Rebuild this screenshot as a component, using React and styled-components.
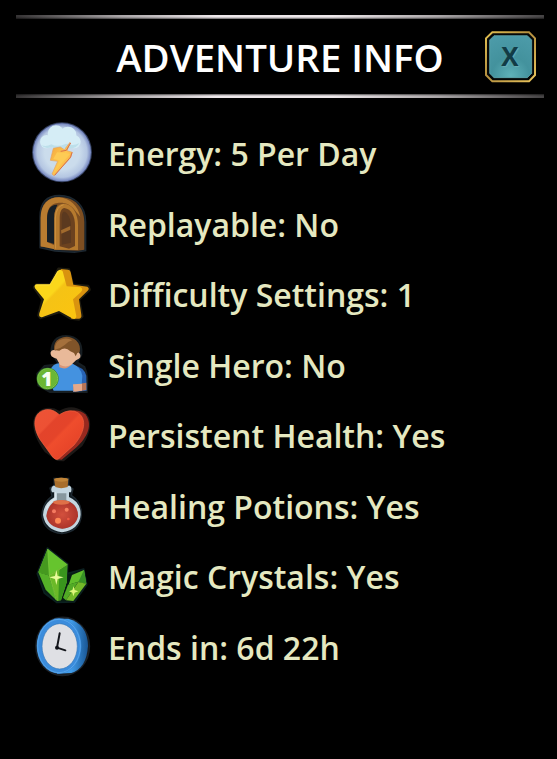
import React from 'react'
import styled, { createGlobalStyle } from 'styled-components'

const GlobalStyle = createGlobalStyle`
    body {
        margin: 0;
        background: #000;
        font-family: 'Open Sans', 'Noto Sans', sans-serif;
    }
`;

const EnergyIcon = () => (
    <Icon viewBox="0 9 228 210">
        <defs>
            <radialGradient id="orb">
                <stop offset="0.6" stopColor="#cbdcec" />
                <stop offset="0.86" stopColor="#b4c6e2" />
                <stop offset="1" stopColor="#7283bd" />
            </radialGradient>
            <linearGradient id="bolt" x1="0" y1="0" x2="1" y2="1">
                <stop offset="0" stopColor="#f0a43c" />
                <stop offset="0.5" stopColor="#ffc650" />
                <stop offset="1" stopColor="#f6a73b" />
            </linearGradient>
        </defs>
        <circle cx="114" cy="112" r="90" fill="#34405f" />
        <circle cx="114" cy="112" r="87" fill="url(#orb)" />
        <g fill="#d5edf6">
            <circle cx="68" cy="80" r="20" />
            <circle cx="96" cy="56" r="25" />
            <circle cx="132" cy="60" r="25" />
            <circle cx="150" cy="80" r="20" />
            <circle cx="105" cy="82" r="26" />
        </g>
        <path d="M52 90Q64 104 82 96Q106 113 126 98Q154 106 166 84Q148 95 126 86Q100 98 82 88Q66 97 52 90Z" fill="#bddfea" />
        <path d="M88 100L109 96L121 104L138 82L129 107L145 112L138 130L90 182L84 177L101 139L79 136Z" fill="url(#bolt)" stroke="#e4a263" strokeWidth="2" />
        <path d="M140 84L127 106L110 109M144 112L140 126L92 181" fill="none" stroke="#d9704b" strokeWidth="3" />
        <path d="M99 112L124 114L138 117L112 146L92 171L108 136L88 132Z" fill="#fdcb55" />
    </Icon>
)

const DoorIcon = () => (
    <Icon viewBox="0 5 228 210">
        <path d="M48 181V88C48 42 72 24 106 24C150 24 185 55 185 104V190L151 195L93 191Z" fill="#17212a" stroke="#1d2831" strokeWidth="4" />
        <path d="M50 178V92C50 50 71 29 106 30C152 29 181 60 181 104V187L161 190L90 187V181Z" fill="#7d4e21" />
        <path d="M50 177V92C50 49 76 29 106 30C139 33 161 55 169 88L156 73C141 49 118 44 100 47C79 50 69 66 69 92V164L91 174V186Z" fill="#b97c30" />
        <path d="M69 163V94C70 65 80 51 100 52L91 77V170Z" fill="#171f26" />
        <path d="M91 187V91C91 63 103 49 119 49C145 49 162 78 162 114V188Z" fill="#b67a2e" />
        <path d="M107 177V94C107 73 113 62 121 62C142 65 153 87 153 115V176L135 184Z" fill="#6c421f" />
        <path d="M113 172V94C113 78 117 70 124 74C137 84 141 101 141 117V166Z" fill="#5b391f" />
        <path d="M111 129L139 116V127L112 139Z" fill="#a16a2d" />
        <path d="M94 184V92Q96 57 119 52" fill="none" stroke="#cf9340" strokeWidth="3" />
    </Icon>
)

const StarIcon = () => (
    <Icon viewBox="0 6 228 210">
        <defs>
            <linearGradient id="star" x1="0" y1="0" x2="1" y2="1">
                <stop offset="0" stopColor="#fbd71b" />
                <stop offset="0.42" stopColor="#fbd71b" />
                <stop offset="0.46" stopColor="#f5c315" />
                <stop offset="1" stopColor="#fcc40f" />
            </linearGradient>
        </defs>
        <path d="M104 36L134 38L146 84L192 88L196 98L164 128L174 178L164 187L140 184L108 164L50 182L44 175L56 127L31 91L38 83L80 83Z" fill="#1e190a" stroke="#1e1b10" strokeWidth="9" strokeLinejoin="round" />
        <path d="M110 36L132 38Q139 39 140 46L148 83L190 89Q198 94 191 101L165 127L172 173Q174 184 164 185L142 185L130 125Z" fill="#d9930f" />
        <path d="M78 82L100 43Q108 33 116 43L128 88L170 91Q179 96 171 105L147 127L157 178Q156 190 144 184L105 162L56 180Q43 183 46 169L60 127L33 94Q28 83 40 82Z" fill="url(#star)" />
        <path d="M35 84L77 84L102 43" fill="none" stroke="#ffe450" strokeWidth="2" strokeLinejoin="round" />
    </Icon>
)

const HeroIcon = () => (
    <Icon viewBox="0 8 228 210">
        <path d="M82 75Q83 27 126 26Q177 28 172 82L159 105L181 119Q194 147 188 194H78L43 174L40 139L62 116L105 111Z" fill="#14191e" stroke="#171e22" strokeWidth="6" />
        <path d="M148 115Q180 118 187 145L188 190L147 194Z" fill="#2863b4" />
        <path d="M157 171L187 166V188L152 193Z" fill="#b77455" />
        <path d="M78 129Q88 107 107 108L146 109Q170 119 175 145L173 172L147 176V190H89L77 164Z" fill="#4492e0" />
        <path d="M147 171L174 169V190L148 193Z" fill="#e5a98a" />
        <path d="M105 92H154L143 111Q128 130 106 120Z" fill="#d99577" />
        <path d="M98 58L151 51L166 77Q177 91 156 99L141 113Q123 122 108 112L98 94Q76 89 80 75Q83 65 96 69Z" fill="#e9b999" />
        <path d="M90 68Q88 43 106 34Q133 20 156 39Q171 53 167 75L160 77L155 87L150 77L139 72Q124 56 106 70Z" fill="#805429" />
        <path d="M93 67Q91 48 107 38Q127 28 145 39Q133 41 123 52Q109 64 93 67Z" fill="#a4703c" />
        <circle cx="71" cy="154" r="33" fill="#3d8b20" />
        <circle cx="71" cy="154" r="29" fill="#6bb733" />
        <circle cx="71" cy="154" r="30" fill="none" stroke="#83c752" strokeWidth="3" />
        <BadgeText x="69" y="175">1</BadgeText>
    </Icon>
)

const HeartIcon = () => (
    <Icon viewBox="0 4 228 210">
        <defs>
            <linearGradient id="heart" x1="0" y1="0" x2="1" y2="1">
                <stop offset="0" stopColor="#ed5436" />
                <stop offset="0.28" stopColor="#ed5134" />
                <stop offset="0.31" stopColor="#e3442b" />
                <stop offset="0.48" stopColor="#e4442a" />
                <stop offset="0.52" stopColor="#ef4d2d" />
                <stop offset="1" stopColor="#df3c24" />
            </linearGradient>
        </defs>
        <path d="M101 183L66 158Q28 107 32 68C38 34 74 21 106 41C144 18 178 35 191 58Q203 91 172 139L118 184Z" fill="#211714" stroke="#1d1917" strokeWidth="8" />
        <path d="M120 42Q163 27 184 47C212 84 181 126 154 149L113 183L97 182Z" fill="#98291f" />
        <path d="M103 181Q94 186 83 171L49 124C27 89 25 49 55 36Q81 25 106 48Q139 27 163 43C190 62 181 103 150 139Z" fill="url(#heart)" stroke="#f3623f" strokeWidth="2" />
    </Icon>
)

const PotionIcon = () => (
    <Icon viewBox="0 6 228 210">
        <defs>
            <radialGradient id="potion">
                <stop offset="0" stopColor="#d3503d" />
                <stop offset="1" stopColor="#ad352b" />
            </radialGradient>
        </defs>
        <path d="M90 28H134V50L147 60L142 79Q174 100 172 139Q168 187 114 194Q60 188 54 142Q53 105 84 81L78 57L91 49Z" fill="#111a20" stroke="#1e2931" strokeWidth="4" />
        <path d="M87 50H138Q145 58 141 70H135V84Q171 99 170 137Q167 181 114 190Q63 182 57 138Q58 103 91 85V70H84Q78 58 87 50Z" fill="#c3d5df" />
        <path d="M99 73H127V94Q161 105 160 138Q152 175 115 179Q77 173 68 142Q69 109 99 94Z" fill="#87979e" />
        <path d="M89 98Q114 91 137 98Q163 112 162 142Q155 176 115 179Q73 175 67 141Q70 115 89 98Z" fill="url(#potion)" />
        <ellipse cx="112" cy="100" rx="25" ry="7" fill="#df7048" />
        <circle cx="90" cy="127" r="6" fill="#f47a60" />
        <circle cx="128" cy="122" r="6" fill="#f98261" />
        <circle cx="102" cy="155" r="9" fill="#ff8856" />
        <circle cx="133" cy="150" r="4" fill="#ed5942" />
        <path d="M67 119Q76 99 94 89V70" fill="none" stroke="#dce8ee" strokeWidth="5" />
        <path d="M90 29Q111 23 133 29L131 54Q111 61 94 54Z" fill="#a86e2c" />
        <ellipse cx="112" cy="32" rx="21" ry="6" fill="#bf8438" />
    </Icon>
)

const CrystalIcon = () => (
    <Icon viewBox="0 4 228 210">
        <path d="M70 25L131 73L130 102L179 88L188 135L151 187L98 188L61 160L40 102Z" fill="#071b14" stroke="#0c2020" strokeWidth="5" strokeLinejoin="round" />
        <path d="M71 27L43 98L76 107L130 74Z" fill="#66c42e" />
        <path d="M71 27L76 107L43 98Z" fill="#45991f" />
        <path d="M43 98L74 107L99 184L65 150Z" fill="#55b028" />
        <path d="M74 107L130 74L128 128L111 182L99 184Z" fill="#6bb928" />
        <path d="M106 91L130 74L129 125L111 181H103Z" fill="#39951d" />
        <path d="M71 28L76 107L130 74M76 107L97 181" fill="none" stroke="#83cf42" strokeWidth="2" />
        <path d="M180 91L144 106L134 135L163 126L187 132Z" fill="#61bd2b" />
        <path d="M180 91L163 127L187 132Z" fill="#379126" />
        <path d="M132 135L163 126L126 182L117 174Z" fill="#51aa25" />
        <path d="M163 127L187 132L148 184L126 182Z" fill="#73b929" />
        <path d="M97 91L101 109L119 113L101 118L97 136L93 118L76 113L93 109Z" fill="#e9fb9a" />
        <path d="M149 140L152 151L163 155L152 159L148 170L145 159L135 155L145 151Z" fill="#dff67a" />
    </Icon>
)

const ClockIcon = () => (
    <Icon viewBox="0 6 228 210">
        <defs>
            <linearGradient id="rim">
                <stop offset="0.5" stopColor="#409be8" />
                <stop offset="1" stopColor="#195694" />
            </linearGradient>
        </defs>
        <ellipse cx="116" cy="109" rx="80" ry="87" fill="#171b20" stroke="#1b2127" strokeWidth="5" />
        <path d="M91 26H133Q190 41 192 107Q188 174 142 189L99 191Z" fill="url(#rim)" />
        <ellipse cx="105" cy="108" rx="67" ry="83" fill="#3b8cdc" />
        <ellipse cx="105" cy="108" rx="64" ry="80" fill="none" stroke="#56a5ea" strokeWidth="3" />
        <ellipse cx="107" cy="109" rx="53" ry="68" fill="#dfe0e4" stroke="#3577b7" strokeWidth="2" />
        <path d="M107 70L99 113L124 121" fill="none" stroke="#16181d" strokeWidth="6" strokeLinecap="round" strokeLinejoin="round" />
        <circle cx="99" cy="113" r="6" fill="#101218" />
    </Icon>
)

const rows = [
    { icon: EnergyIcon, label: 'Energy: 5 Per Day' },
    { icon: DoorIcon, label: 'Replayable: No' },
    { icon: StarIcon, label: 'Difficulty Settings: 1' },
    { icon: HeroIcon, label: 'Single Hero: No' },
    { icon: HeartIcon, label: 'Persistent Health: Yes' },
    { icon: PotionIcon, label: 'Healing Potions: Yes' },
    { icon: CrystalIcon, label: 'Magic Crystals: Yes' },
    { icon: ClockIcon, label: 'Ends in: 6d 22h' },
]

const App = () => {
    return (
        <Panel>
            <GlobalStyle />
            <Header>
                <Rule $shade="bottom" />
                <TitleBar>
                    <Title>ADVENTURE INFO</Title>
                    <CloseButton aria-label="Close">
                        <CloseFrame viewBox="0 0 156 156">
                            <defs>
                                <linearGradient id="gold" x1="0" y1="0" x2="1" y2="1">
                                    <stop offset="0" stopColor="#e2bf50" />
                                    <stop offset="0.45" stopColor="#b48f3f" />
                                    <stop offset="1" stopColor="#e9c45b" />
                                </linearGradient>
                                <radialGradient id="teal" cx="0.5" cy="0.95" r="1">
                                    <stop offset="0" stopColor="#5fb2b9" />
                                    <stop offset="0.45" stopColor="#43929d" />
                                    <stop offset="1" stopColor="#4c9ba9" />
                                </radialGradient>
                            </defs>
                            <path d="M22 4H132L150 22V132L132 151H22L3 132V22Z" fill="#050808" stroke="url(#gold)" strokeWidth="6" />
                            <path d="M27 14H127L140 27V127L127 140H27L14 127V27Z" fill="url(#teal)" stroke="#68b4bb" strokeWidth="2" />
                        </CloseFrame>
                        <CloseLabel>X</CloseLabel>
                    </CloseButton>
                </TitleBar>
                <Rule $shade="top" />
            </Header>
            <List>
                {rows.map(({ icon: RowIcon, label }) => (
                    <Row key={label}>
                        <RowIcon />
                        <Label>{label}</Label>
                    </Row>
                ))}
            </List>
        </Panel>
    )
}

const Panel = styled.main`
    box-sizing: border-box;
    width: 557px;
    height: 759px;
    padding-top: 15px;
    background: #000;
    overflow: hidden;
`;

const Header = styled.header`
    margin: 0 13px 0 16px;
`;

const Rule = styled.div`
    height: 4px;
    background:
        linear-gradient(to ${(props) => props.$shade}, transparent 50%, rgba(0, 0, 0, 0.6)),
        linear-gradient(to right, #343233, #aaa6a8 20%, #eee8eb 38%, #eee8eb 60%, #aaa6a8 80%, #444243);
`;

const TitleBar = styled.div`
    display: grid;
    grid-template-columns: 1fr 52px;
    align-items: center;
    height: 75px;
    padding-right: 7px;
`;

const Title = styled.h1`
    margin: 0;
    padding-left: 59px;
    text-align: center;
    white-space: nowrap;
    color: #fff;
    font-size: 38.4px;
    font-weight: 600;
    line-height: 52px;
`;

const CloseButton = styled.button`
    display: grid;
    place-items: center;
    width: 52px;
    height: 52px;
    padding: 0;
    border: 0;
    background: none;
`;

const CloseFrame = styled.svg`
    grid-area: 1 / 1;
    width: 52px;
    height: 52px;
`;

const CloseLabel = styled.span`
    grid-area: 1 / 1;
    padding: 0 2px 2px 0;
    color: #123c46;
    font-family: 'Open Sans', sans-serif;
    font-size: 26px;
    font-weight: 700;
    line-height: 30px;
    text-shadow: 1px 1px 1px #69aeb4;
`;

const List = styled.div`
    display: grid;
    grid-template-rows: repeat(8, 70.57px);
    padding: 20px 0 0 24px;
`;

const Row = styled.div`
    display: flex;
    align-items: flex-start;
    gap: 8px;
`;

const Icon = styled.svg`
    flex: none;
    width: 76px;
    height: 70px;
`;

const BadgeText = styled.text`
    fill: #f7fff1;
    font-size: 58px;
    font-weight: 800;
    text-anchor: middle;
`;

const Label = styled.span`
    color: #e5e8c0;
    font-size: 32px;
    font-weight: 600;
    line-height: 71px;
    white-space: nowrap;
`;

export default App;
